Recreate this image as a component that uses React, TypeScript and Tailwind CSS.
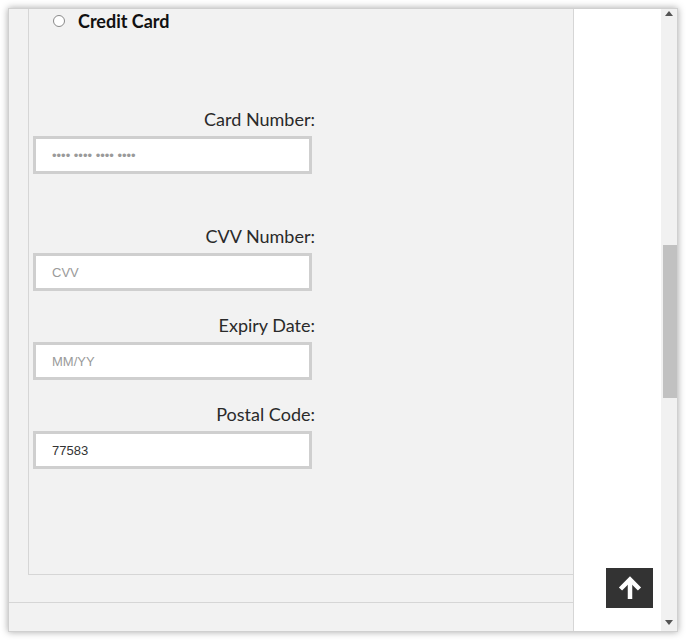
import React from "react";

function Field({
  label,
  placeholder,
  value,
  mt,
}: {
  label: string;
  placeholder?: string;
  value?: string;
  mt: string;
}) {
  return (
    <div className={`${mt} w-[283px] flex flex-col`}>
      <div
        className="text-right text-[18px] leading-[25px] text-[#2a2a2a] pr-[1px]"
        style={{ fontFamily: "Lato, 'Noto Sans', sans-serif" }}
      >
        {label}
      </div>
      <input
        readOnly
        placeholder={placeholder}
        defaultValue={value}
        className="mt-[4px] w-[279px] h-[38px] border-[3px] border-[#cfcfcf] bg-white pl-[16px] text-[13px] text-[#333] placeholder:text-[#9a9a9a] outline-none"
        style={{ fontFamily: "'Liberation Sans', Arial, sans-serif" }}
      />
    </div>
  );
}

export default function App() {
  return (
    <div className="w-[686px] h-[640px] bg-white p-[8px]">
      <div className="relative w-[670px] h-[624px] border border-[#d0d0d0] shadow-[0_0_7px_rgba(0,0,0,0.35)] flex overflow-hidden bg-white">
        {/* left column */}
        <div className="w-[565px] h-full bg-[#f2f2f2] border-r border-[#d6d6d6] flex flex-col">
          <div className="ml-[19px] h-[566px] border-l border-b border-[#d6d6d6] pl-[4px] flex flex-col">
            <div className="flex items-center h-[24px] mt-0 ml-[20px]">
              <span className="w-[12px] h-[12px] rounded-full border border-[#8a8a8a] bg-white shrink-0" />
              <span
                className="ml-[13px] text-[18px] font-bold text-[#111] leading-[24px]"
                style={{ fontFamily: "Lato, 'Noto Sans', sans-serif" }}
              >
                Credit Card
              </span>
            </div>
            <Field mt="mt-[74px]" label="Card Number:" placeholder="•••• •••• •••• ••••" />
            <Field mt="mt-[50px]" label="CVV Number:" placeholder="CVV" />
            <Field mt="mt-[22px]" label="Expiry Date:" placeholder="MM/YY" />
            <Field mt="mt-[22px]" label="Postal Code:" value="77583" />
          </div>
          <div className="mt-[27px] border-t border-[#d6d6d6] flex-1" />
        </div>
        {/* white area */}
        <div className="w-[87px] h-full bg-white" />
        {/* scrollbar */}
        <div className="w-[16px] h-full bg-[#f1f1f1] relative flex flex-col items-center">
          <svg width="8" height="5" viewBox="0 0 8 5" className="mt-[2px]">
            <polygon points="4,0 8,5 0,5" fill="#555" />
          </svg>
          <div className="mt-[229px] w-[14px] ml-[1px] h-[153px] bg-[#c1c1c1]" />
          <div className="flex-1" />
          <svg width="8" height="5" viewBox="0 0 8 5" className="mb-[6px]">
            <polygon points="0,0 8,0 4,5" fill="#555" />
          </svg>
        </div>
        {/* back to top */}
        <div className="absolute left-[597px] top-[559px] w-[47px] h-[40px] bg-[#333333] flex items-center justify-center">
          <svg width="28" height="28" viewBox="0 0 28 28">
            <path d="M14 25 V6" stroke="white" strokeWidth="4.5" fill="none" />
            <path d="M4.5 15 L14 5.5 L23.5 15" stroke="white" strokeWidth="4.5" fill="none" strokeLinejoin="miter" />
          </svg>
        </div>
      </div>
    </div>
  );
}
